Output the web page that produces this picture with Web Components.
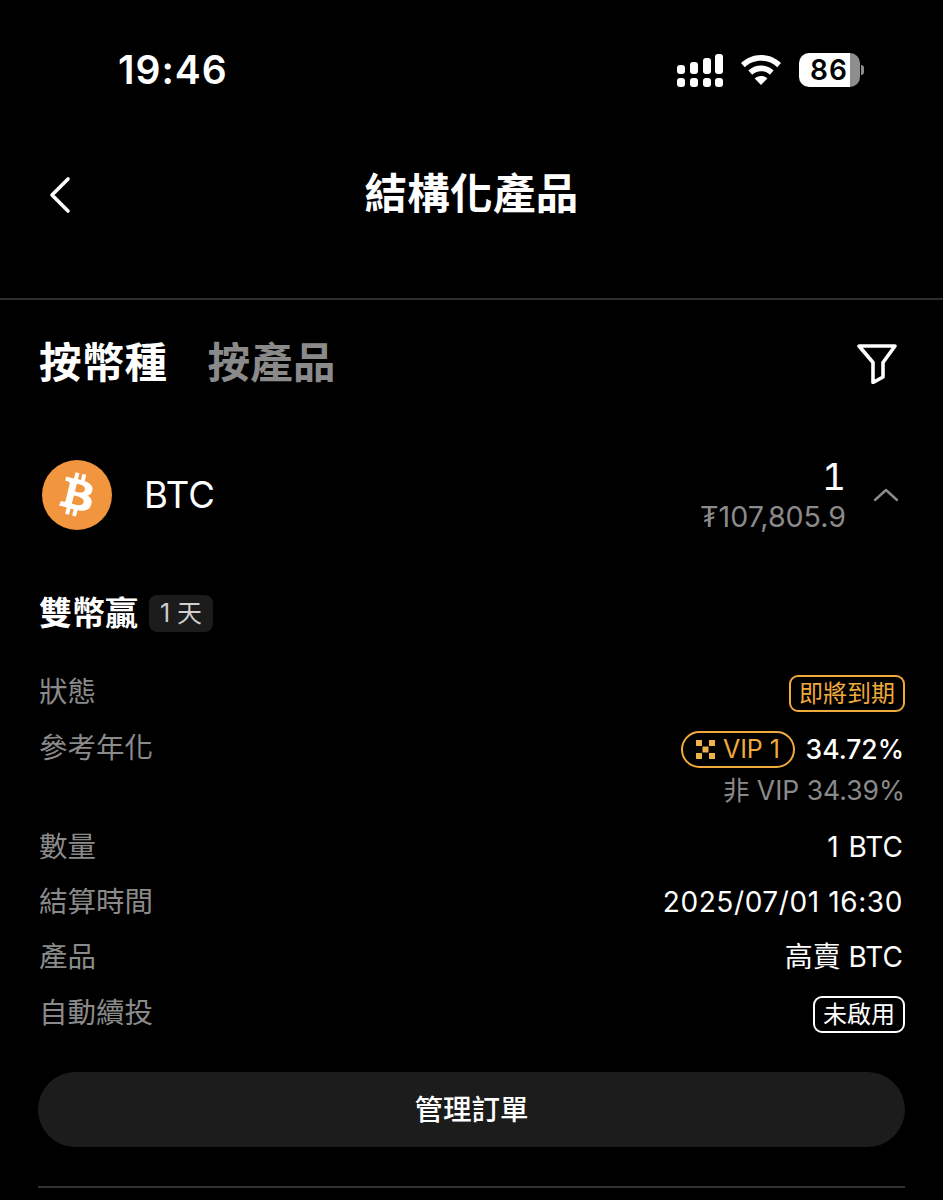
<!DOCTYPE html>
<html lang="zh-Hant">
<head>
<meta charset="utf-8">
<title>結構化產品</title>
<style>
  html, body { margin: 0; background: #000; }
  body { font-family: Inter, "Noto Sans CJK TC", sans-serif; color: #fff; }
</style>
</head>
<body>
<x-app>
  <x-status-bar time="19:46" battery="86"></x-status-bar>
  <x-nav-bar>結構化產品</x-nav-bar>
  <x-tabs></x-tabs>
  <x-coin-row name="BTC" amount="1" value="₮107,805.9"></x-coin-row>
  <x-product-title days="1 天">雙幣贏</x-product-title>
  <x-detail-row label="狀態" height="57"><x-tag tone="gold">即將到期</x-tag></x-detail-row>
  <x-detail-row label="參考年化" height="99" top>
    <x-apr rate="34.72%" base="非 VIP 34.39%"></x-apr>
  </x-detail-row>
  <x-detail-row label="數量" height="55" wide>1 BTC</x-detail-row>
  <x-detail-row label="結算時間" height="55" spaced>2025/07/01 16:30</x-detail-row>
  <x-detail-row label="產品" height="56">高賣 BTC</x-detail-row>
  <x-detail-row label="自動續投" height="56"><x-tag tone="white">未啟用</x-tag></x-detail-row>
  <x-action-button>管理訂單</x-action-button>
</x-app>

<script>
// 共通: shadow root を作って markup を入れるだけの基底クラス
class Base extends HTMLElement {
  connectedCallback() {
    if (!this.shadowRoot) this.attachShadow({ mode: 'open' });
    this.shadowRoot.innerHTML = this.render();
  }
  attr(name) { return this.getAttribute(name) || ''; }
}

class XApp extends Base {
  render() {
    return `<style>
      :host { display: flex; flex-direction: column; width: 943px; height: 1200px; overflow: hidden; background: #000; }
    </style><slot></slot>`;
  }
}

class XStatusBar extends Base {
  render() {
    return `<style>
      :host { display: flex; align-items: center; height: 140px; padding: 0 79px 0 118px; box-sizing: border-box; }
      .time { font-size: 39px; font-weight: 600; line-height: 40px; letter-spacing: 1px; }
      .right { margin-left: auto; display: flex; align-items: center; }
      svg { display: block; }
      .wifi { margin-left: 18px; }
      .bat { margin-left: 18px; display: flex; align-items: center; }
      .cell { width: 61px; height: 34px; border-radius: 10px; box-sizing: border-box; padding-right: 1px;
        background: linear-gradient(90deg, #fff 0 51px, #8e8e8e 51px);
        display: flex; align-items: center; justify-content: center;
        color: #000; font-size: 28px; font-weight: 600; letter-spacing: 1px; }
      .nub { width: 3px; height: 10px; margin-left: 1px; background: #8e8e8e; border-radius: 0 3px 3px 0; }
    </style>
    <div class="time">${this.attr('time')}</div>
    <div class="right">
      <svg width="46" height="33" viewBox="0 0 46 33" fill="#fff">
        <rect x="0" y="11" width="8" height="9" rx="3"/>
        <rect x="13" y="8" width="8" height="12" rx="3"/>
        <rect x="26" y="4" width="8" height="16" rx="3"/>
        <rect x="38" y="0" width="8" height="20" rx="3"/>
        <rect x="0" y="24" width="8" height="9" rx="3"/>
        <rect x="13" y="24" width="8" height="9" rx="3"/>
        <rect x="26" y="24" width="8" height="9" rx="3"/>
        <rect x="38" y="24" width="8" height="9" rx="3"/>
      </svg>
      <svg class="wifi" width="40" height="30" viewBox="0 0 40 30" fill="#fff">
        <path d="M20 0C12 0 5.500 3 0 8l3.800 4.200C8 8.200 13.500 5.800 20 5.800s12 2.400 16.200 6.400L40 8C34.500 3 28 0 20 0z"/>
        <path d="M20 10.500c-5 0-9.300 1.900-12.600 5l3.800 4.200c2.300-2.200 5.300-3.500 8.800-3.500s6.500 1.300 8.800 3.500l3.800-4.200c-3.300-3.100-7.600-5-12.600-5z"/>
        <path d="M20 21c-2.600 0-4.700 1-6.300 2.400L20 30l6.300-6.600C24.700 22 22.600 21 20 21z"/>
      </svg>
      <div class="bat"><div class="cell">${this.attr('battery')}</div><div class="nub"></div></div>
    </div>`;
  }
}

class XNavBar extends Base {
  render() {
    return `<style>
      :host { display: flex; align-items: center; justify-content: center; height: 160px; padding-bottom: 51px; box-sizing: border-box;
        position: relative; border-bottom: 2px solid #2e2e2e; }
      .back { position: absolute; left: 48px; top: 36px; display: block; }
      .title { font-size: 42.500px; font-weight: 600; line-height: 50px; letter-spacing: 0.300px; }
    </style>
    <svg class="back" width="24" height="38" viewBox="0 0 24 38" fill="none" stroke="#fff" stroke-width="3.600" stroke-linecap="round" stroke-linejoin="round"><path d="M20 3 4 19l16 16"/></svg>
    <div class="title"><slot></slot></div>`;
  }
}

class XTabs extends Base {
  render() {
    return `<style>
      :host { display: flex; align-items: center; height: 123px; padding: 3px 46px 0 39px; box-sizing: border-box; }
      .tab { font-size: 42.500px; font-weight: 700; line-height: 50px; color: #fff; letter-spacing: 0.300px; }
      .off { color: #8a8a8a; margin-left: 40px; }
      svg { margin-left: auto; margin-top: 2px; display: block; }
    </style>
    <span class="tab">按幣種</span><span class="tab off">按產品</span>
    <svg width="40" height="40" viewBox="0 0 40 40" fill="none" stroke="#fff" stroke-width="3.600" stroke-linejoin="round"><path d="M2 2h36L26 18.500V33l-10 5.500V18.500z"/></svg>`;
  }
}

class XCoinRow extends Base {
  render() {
    return `<style>
      :host { display: flex; align-items: center; height: 156px; padding: 0 44px 13px 42px; box-sizing: border-box; }
      svg { display: block; flex: none; }
      .name { font-size: 36.500px; line-height: 44px; margin-left: 32px; }
      .vals { margin-left: auto; margin-top: 4px; text-align: right; }
      .amount { font-size: 37px; line-height: 40px; font-variant-numeric: tabular-nums; }
      .value { font-size: 28.600px; line-height: 40px; color: #8a8a8a; }
      .chev { margin-left: 27px; }
    </style>
    <svg width="70" height="70" viewBox="0 0 64 64">
      <circle cx="32" cy="32" r="32" fill="#f2953f"/>
      <path fill="#fff" d="m46.100 27.441c.637-4.258-2.605-6.547-7.038-8.074l1.438-5.768-3.511-.875-1.400 5.616c-.923-.23-1.871-.447-2.813-.662l1.410-5.653-3.509-.875-1.439 5.766c-.764-.174-1.514-.346-2.242-.527l.004-.018-4.842-1.209-.934 3.750s2.605.597 2.550.634c1.422.355 1.679 1.296 1.636 2.042l-1.638 6.571c.098.025.225.061.365.117-.117-.029-.242-.061-.371-.092l-2.296 9.205c-.174.432-.615 1.080-1.609.834.035.051-2.552-.637-2.552-.637l-1.743 4.019 4.569 1.139c.85.213 1.683.436 2.503.646l-1.453 5.834 3.507.875 1.439-5.772c.958.26 1.888.5 2.798.726l-1.434 5.745 3.511.875 1.453-5.823c5.987 1.133 10.489.676 12.384-4.739 1.527-4.360-.076-6.875-3.226-8.515 2.294-.529 4.022-2.038 4.483-5.155zm-8.022 11.249c-1.085 4.360-8.426 2.003-10.806 1.412l1.928-7.729c2.380.594 10.012 1.770 8.878 6.317zm1.086-11.312c-.99 3.966-7.100 1.951-9.082 1.457l1.748-7.010c1.982.494 8.365 1.416 7.334 5.553z"/>
    </svg>
    <div class="name">${this.attr('name')}</div>
    <div class="vals">
      <div class="amount">${this.attr('amount')}</div>
      <div class="value">${this.attr('value')}</div>
    </div>
    <svg class="chev" width="26" height="14" viewBox="0 0 26 14" fill="none" stroke="#8a8a8a" stroke-width="2.400" stroke-linecap="round" stroke-linejoin="round"><path d="M2 12 13 2l11 10"/></svg>`;
  }
}

class XProductTitle extends Base {
  render() {
    return `<style>
      :host { display: flex; align-items: center; height: 84px; padding: 0 40px 16px 39px; box-sizing: border-box; }
      .t { font-size: 33px; font-weight: 700; line-height: 40px; }
      .d { margin-left: 11px; height: 37px; width: 64px; border-radius: 8px; background: #1c1c1c; color: #cfcfcf;
        font-size: 25px; line-height: 37px; text-align: center; }
    </style>
    <span class="t"><slot></slot></span><span class="d">${this.attr('days')}</span>`;
  }
}

class XDetailRow extends Base {
  render() {
    const top = this.hasAttribute('top');
    const extra = this.hasAttribute('spaced') ? 'letter-spacing: 0.600px;' : this.hasAttribute('wide') ? 'word-spacing: 2px;' : '';
    return `<style>
      :host { display: flex; justify-content: space-between; align-items: ${top ? 'flex-start' : 'center'};
        height: ${this.attr('height')}px; padding: 0 40px 0 39px; box-sizing: border-box; font-size: 28.500px; color: #fff; }
      .l { color: #8a8a8a; line-height: 40px; ${top ? 'margin-top: 8px;' : ''} }
      .v { line-height: 40px; font-size: 28px; ${extra} }
    </style>
    <span class="l">${this.attr('label')}</span><span class="v"><slot></slot></span>`;
  }
}

class XTag extends Base {
  render() {
    const color = this.attr('tone') === 'gold' ? '#f0a93c' : '#fff';
    return `<style>
      :host { display: inline-flex; align-items: center; height: 37px; padding: 0 8px; margin-right: -2px; box-sizing: border-box;
        border: 2px solid ${color}; border-radius: 9px; color: ${color}; font-size: 24px; line-height: 33px; vertical-align: middle; }
    </style><slot></slot>`;
  }
}

class XApr extends Base {
  render() {
    return `<style>
      :host { display: block; text-align: right; margin-right: -1px; }
      .top { display: flex; align-items: center; justify-content: flex-end; height: 40px; margin-top: 9px; }
      .vip { display: inline-flex; align-items: center; height: 37px; padding: 0 12.500px; box-sizing: border-box;
        border: 2px solid #f0a93c; border-radius: 19px; color: #f0a93c; font-size: 25px; }
      .vip svg { margin-right: 8px; display: block; }
      .rate { margin-left: 11px; font-size: 26.500px; font-weight: 500; }
      .base { color: #8a8a8a; font-size: 26.500px; line-height: 40px; margin-top: 1px; margin-right: -1px; }
    </style>
    <div class="top">
      <span class="vip">
        <svg width="19" height="19" viewBox="0 0 19 19" fill="#f0b24a">
          <rect x="0" y="0" width="6" height="6"/><rect x="13" y="0" width="6" height="6"/>
          <rect x="6.500" y="6.500" width="6" height="6"/>
          <rect x="0" y="13" width="6" height="6"/><rect x="13" y="13" width="6" height="6"/>
        </svg>VIP 1</span>
      <span class="rate">${this.attr('rate')}</span>
    </div>
    <div class="base">${this.attr('base')}</div>`;
  }
}

class XActionButton extends Base {
  render() {
    return `<style>
      :host { display: block; padding: 31px 38px 0; border: 0; }
      .btn { height: 75px; border-radius: 38px; background: #1c1c1c; display: flex; align-items: center; justify-content: center;
        box-sizing: border-box; padding-bottom: 5px; font-size: 28.500px; font-weight: 500; }
      .rule { height: 2px; background: #333; margin-top: 39px; }
    </style>
    <div class="btn"><slot></slot></div><div class="rule"></div>`;
  }
}

customElements.define('x-app', XApp);
customElements.define('x-status-bar', XStatusBar);
customElements.define('x-nav-bar', XNavBar);
customElements.define('x-tabs', XTabs);
customElements.define('x-coin-row', XCoinRow);
customElements.define('x-product-title', XProductTitle);
customElements.define('x-detail-row', XDetailRow);
customElements.define('x-tag', XTag);
customElements.define('x-apr', XApr);
customElements.define('x-action-button', XActionButton);
</script>
</body>
</html>
